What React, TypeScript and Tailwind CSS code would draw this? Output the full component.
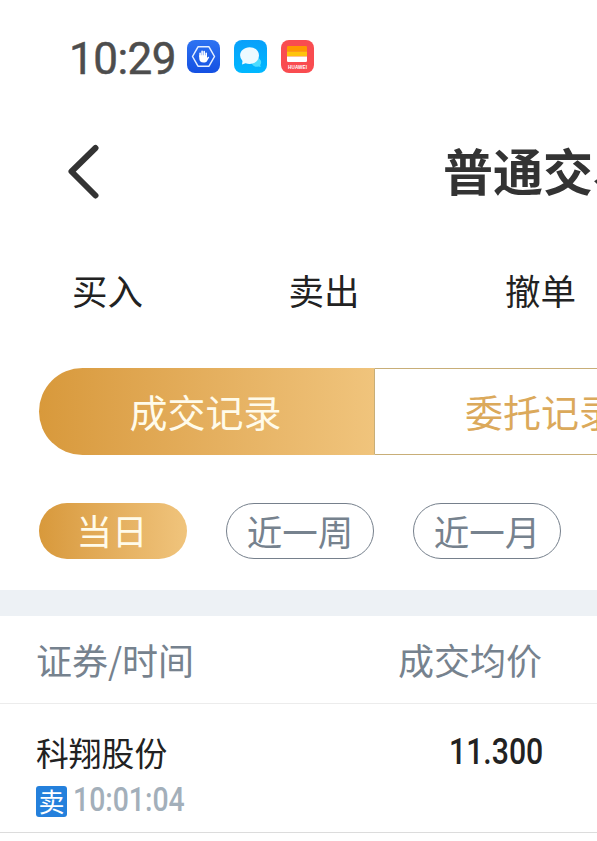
import React from 'react';
import clsx from 'clsx';

const NAV_ITEMS = ['买入', '卖出', '撤单'];
const RANGES = ['当日', '近一周', '近一月'];

interface Trade {
  name: string;
  side: string;
  time: string;
  price: string;
}

const TRADES: Trade[] = [{ name: '科翔股份', side: '卖', time: '10:01:04', price: '11.300' }];

function HandIcon() {
  return (
    <svg width="33" height="33" viewBox="0 0 33 33">
      <defs>
        <linearGradient id="hand" x1="0" y1="0" x2="0" y2="1">
          <stop offset="0" stopColor="#2e73f2" />
          <stop offset="1" stopColor="#1450e2" />
        </linearGradient>
      </defs>
      <rect width="33" height="33" rx="8" fill="url(#hand)" />
      <path d="M11 6.8h11l5.5 9.7L22 26.2H11L5.5 16.5z" fill="none" stroke="#e6f0ff" strokeWidth="1.5" strokeLinejoin="round" />
      <path d="M13.1 16.8v-3.5M15.1 16v-4.600M17.200 16v-4.400M19.200 16.800v-3.500" stroke="#fff" strokeWidth="1.6" strokeLinecap="round" />
      <path d="M12.3 15.2h7.7v2.6l1-.9c.8-.5 1.4.1 1 .8l-2.100 3.500c-.8 1-1.800 1.300-3.300 1.300-2.800 0-4.300-1.500-4.300-4z" fill="#fff" />
    </svg>
  );
}

function ChatIcon() {
  return (
    <svg width="33" height="33" viewBox="0 0 33 33">
      <defs>
        <linearGradient id="chat" x1="0" y1="0" x2="0" y2="1">
          <stop offset="0" stopColor="#08a0fa" />
          <stop offset="1" stopColor="#00b8ff" />
        </linearGradient>
      </defs>
      <rect width="33" height="33" rx="8" fill="url(#chat)" />
      <path d="M22.5 17.5a4.8 4.8 0 0 1 3.7 7.6l.5 1.900-2.400-.5a5 5 0 0 1-6.600-3.300z" fill="#4bdcff" />
      <path d="M15.6 7.2c5.4 0 9.4 3.6 9.4 8.3s-4 8.4-9.4 8.4c-1.5 0-2.8-.2-4-.7L8 24.4l.5-3.4a8 8 0 0 1-2.4-5.5c0-4.7 4.1-8.3 9.5-8.3z" fill="#ecfaff" />
    </svg>
  );
}

function WalletIcon() {
  return (
    <svg width="33" height="33" viewBox="0 0 33 33">
      <rect width="33" height="33" rx="8" fill="#f94c50" />
      <path d="M7.2 6h17.6A1.2 1.2 0 0 1 26 7.2v4.3H6V7.2A1.2 1.2 0 0 1 7.2 6z" fill="#ff9800" />
      <path d="M6 11.5h20v5H6z" fill="#ffc40c" />
      <path d="M6 16.5h20v4.3a1.2 1.2 0 0 1-1.2 1.2H7.2A1.2 1.2 0 0 1 6 20.8z" fill="#fff" />
      <text x="16.5" y="28.8" textAnchor="middle" fontSize="4.6" fontWeight="700" textLength="19" fill="#fff" fontFamily="Liberation Sans, sans-serif">
        HUAWEI
      </text>
    </svg>
  );
}

export default function App() {
  return (
    <div className="w-[597px] h-[841px] overflow-hidden bg-white text-[#222] font-['Noto_Sans_CJK_SC',sans-serif] whitespace-nowrap">
      <div className="flex h-[113px] items-center pl-[69px]">
        <span className="w-[118px] shrink-0 pt-[4px] text-[44px] leading-[52px] tracking-[-0.5px] text-[#4d4d4d] [-webkit-text-stroke:0.5px_#4d4d4d] font-['Roboto',sans-serif]">10:29</span>
        <div className="flex gap-[14px]">
          <HandIcon />
          <ChatIcon />
          <WalletIcon />
        </div>
      </div>

      <header className="flex h-[118px] items-center pl-[67px]">
        <svg className="shrink-0" width="34" height="56" viewBox="0 0 34 56" fill="none" stroke="#333" strokeWidth="6" strokeLinecap="round" strokeLinejoin="round">
          <path d="M28.500 4 4.500 27.500l24 24" />
        </svg>
        <h1 className="ml-[342px] pb-[6px] text-[50px] leading-[60px] font-bold text-[#333]">普通交易</h1>
      </header>

      <nav className="flex h-[137px] pl-[72px] pt-[34px]">
        {NAV_ITEMS.map((item) => (
          <span key={item} className="w-[216.5px] shrink-0 text-[35.5px] leading-[50px]">{item}</span>
        ))}
      </nav>

      <div className="ml-[39px] flex h-[87px] text-[38px]">
        <div className="flex w-[335px] shrink-0 items-center justify-center rounded-l-full bg-linear-to-r from-[#d8993b] to-[#f0c47c] pb-[3px] pr-[2px] text-[#fffbea]">
          成交记录
        </div>
        <div className="flex w-[336px] shrink-0 items-center justify-center rounded-r-full border border-[#c8ae78] pb-[3px] pr-[2px] text-[#dba95b]">
          委托记录
        </div>
      </div>

      <div className="mt-[48px] flex gap-[39px] pl-[39px]">
        {RANGES.map((range, i) => (
          <span
            key={range}
            className={clsx(
              'flex h-[56px] w-[148px] shrink-0 items-center justify-center rounded-full text-[35.5px]',
              i === 0 ? 'bg-linear-to-r from-[#d8993b] to-[#f0c47c] pr-[2px] pb-[2px] text-[#fffbea]' : 'border border-[#76808c] pb-[1px] text-[#76828e]',
            )}
          >
            {range}
          </span>
        ))}
      </div>

      <div className="mt-[31px] h-[26px] bg-[#edf1f5]" />

      <div className="flex h-[88px] items-center justify-between border-b border-[#ececec] pb-[2px] pl-[36px] pr-[55px] text-[36px] text-[#76828e]">
        <span>证券/时间</span>
        <span>成交均价</span>
      </div>

      {TRADES.map((trade) => (
        <div key={trade.time} className="flex h-[129px] justify-between border-b border-[#dcdcdc] pl-[36px] pr-[54px] pt-[24px]">
          <div>
            <div className="text-[32.8px] leading-[48px]">{trade.name}</div>
            <div className="mt-[10px] flex h-[31px] items-center">
              <span className="flex size-[31px] items-center justify-center rounded-[3px] bg-[#2480dc] pb-[2px] text-[26px] leading-none text-white">{trade.side}</span>
              <span className="ml-[6px] origin-left scale-x-[0.86] pb-[4px] text-[33px] leading-[31px] font-medium text-[#a3afba] font-['Roboto',sans-serif]">{trade.time}</span>
            </div>
          </div>
          <span className="origin-right scale-x-[0.84] text-[36px] leading-[48px] font-medium font-['Roboto',sans-serif]">{trade.price}</span>
        </div>
      ))}
    </div>
  );
}
